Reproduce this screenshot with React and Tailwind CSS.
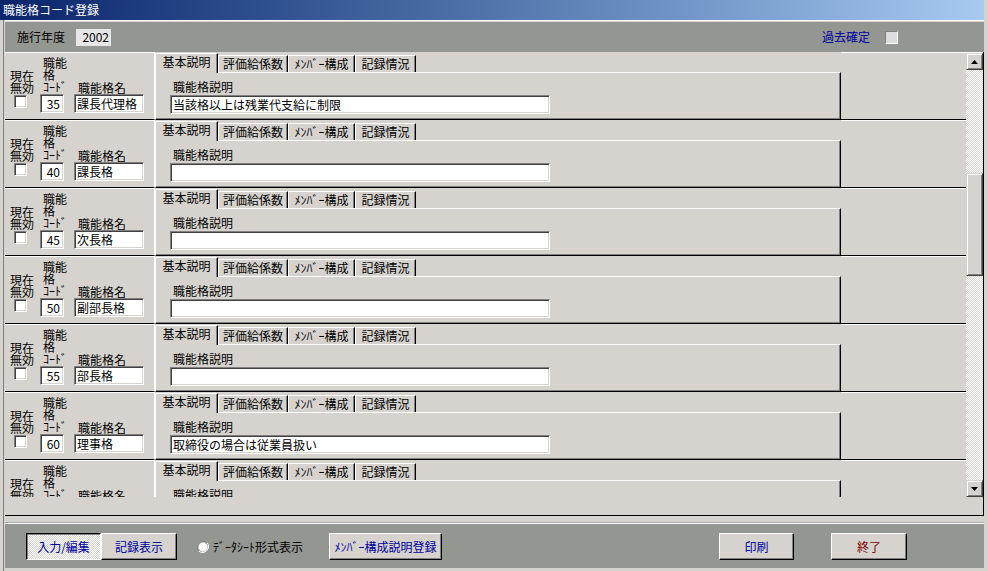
import React from "react";

const rows = [
  { code: "35", name: "課長代理格", desc: "当該格以上は残業代支給に制限" },
  { code: "40", name: "課長格", desc: "" },
  { code: "45", name: "次長格", desc: "" },
  { code: "50", name: "副部長格", desc: "" },
  { code: "55", name: "部長格", desc: "" },
  { code: "60", name: "理事格", desc: "取締役の場合は従業員扱い" },
  { code: "", name: "", desc: "" },
];

const sunken =
  "bg-white border border-t-[#808080] border-l-[#808080] border-b-white border-r-white shadow-[inset_1px_1px_0_#404040,inset_-1px_-1px_0_#d6d3ce]";
const raised =
  "bg-[#d6d3ce] border border-t-white border-l-white border-b-black border-r-black shadow-[inset_-1px_-1px_0_#808080]";

function Row({ code, name, desc }) {
  return (
    <div className="flex h-[68px] shrink-0">
      {/* left fields */}
      <div className="w-[150px] shrink-0 border-t border-t-white border-r border-r-white border-b border-b-black flex pl-[5px] pt-[4px]">
        <div className="w-[30px] shrink-0 flex flex-col">
          <div className="h-[13px]" />
          <div className="h-[12px] leading-[12px] whitespace-nowrap">現在</div>
          <div className="h-[12px] leading-[12px] whitespace-nowrap">無効</div>
          <div className={`mt-[1px] ml-[4px] w-[13px] h-[13px] ${sunken}`} />
        </div>
        <div className="w-[25px] shrink-0 flex flex-col">
          <div className="h-[12px] leading-[12px] pl-[3px] whitespace-nowrap">職能</div>
          <div className="h-[12px] leading-[12px] pl-[3px] whitespace-nowrap">格</div>
          <div className="h-[12px] leading-[12px] pl-[3px] whitespace-nowrap">ｺｰﾄﾞ</div>
          <div
            className={`mt-[1px] w-[24px] h-[19px] ${sunken} flex items-center justify-end pr-[3px] leading-[12px]`}
          >
            {code}
          </div>
        </div>
        <div className="ml-[9px] w-[70px] shrink-0 flex flex-col">
          <div className="h-[25px]" />
          <div className="h-[12px] leading-[12px] pl-[4px] whitespace-nowrap">職能格名</div>
          <div
            className={`w-[70px] h-[19px] ${sunken} flex items-center pl-[2px] leading-[12px] whitespace-nowrap overflow-hidden`}
          >
            {name}
          </div>
        </div>
      </div>

      {/* tab control */}
      <div className="w-[686px] shrink-0 flex flex-col">
        <div className="h-[20px] flex items-end shrink-0">
          <div className="relative z-10 -mb-px w-[63px] h-[20px] bg-[#d6d3ce] border-l border-t border-white border-r border-r-black shadow-[inset_-1px_0_0_#808080] rounded-tl-[2px] flex justify-center pt-[2px] leading-[12px] whitespace-nowrap">
            基本説明
          </div>
          <div className="w-[70px] h-[17px] bg-[#d6d3ce] border-l border-t border-white border-r border-r-black shadow-[inset_-1px_0_0_#808080] flex justify-center pt-[2px] leading-[12px] whitespace-nowrap">
            評価給係数
          </div>
          <div className="w-[67px] h-[17px] bg-[#d6d3ce] border-l border-t border-white border-r border-r-black shadow-[inset_-1px_0_0_#808080] flex justify-center pt-[2px] leading-[12px] whitespace-nowrap">
            ﾒﾝﾊﾞｰ構成
          </div>
          <div className="w-[61px] h-[17px] bg-[#d6d3ce] border-l border-t border-white border-r border-r-black shadow-[inset_-1px_0_0_#808080] flex justify-center pt-[2px] leading-[12px] whitespace-nowrap">
            記録情況
          </div>
        </div>
        <div className="flex-1 border-t border-l border-white border-r border-r-black border-b border-b-black shadow-[inset_-1px_-1px_0_#808080] flex flex-col">
          <div className="mt-[8px] pl-[17px] h-[12px] leading-[12px] whitespace-nowrap">職能格説明</div>
          <div
            className={`mt-[2px] ml-[14px] w-[380px] h-[19px] ${sunken} flex items-center pl-[2px] leading-[12px] whitespace-nowrap`}
          >
            {desc}
          </div>
        </div>
      </div>

      {/* filler */}
      <div className="flex-1 border-t border-t-white border-b border-b-black" />
    </div>
  );
}

function ScrollBtn({ up }) {
  return (
    <div className="h-[17px] w-[17px] shrink-0 bg-[#d6d3ce] border border-t-[#d6d3ce] border-l-[#d6d3ce] border-b-[#404040] border-r-[#404040] shadow-[inset_1px_1px_0_#ffffff,inset_-1px_-1px_0_#808080] flex items-center justify-center">
      <svg width="7" height="4" viewBox="0 0 7 4">
        {up ? (
          <polygon points="3.5,0 7,4 0,4" fill="#000" />
        ) : (
          <polygon points="0,0 7,0 3.5,4" fill="#000" />
        )}
      </svg>
    </div>
  );
}

export default function App() {
  return (
    <div className="w-[988px] h-[571px] bg-[#d6d3ce] overflow-hidden text-[12px] leading-[12px] text-black font-['Noto_Sans_CJK_JP','Noto_Sans',sans-serif] flex flex-col">
      {/* title bar */}
      <div className="h-[20px] shrink-0 mr-[4px] bg-linear-to-r from-[#0a246a] to-[#a6caf0] text-white flex items-center pl-[3px] text-[12px]">
        職能格コード登録
      </div>

      <div className="flex-1 ml-[3px] mr-[4px] border-l border-l-[#808080] pl-[1px] flex flex-col">
        <div className="h-[2px] shrink-0 border-t border-white" />

        {/* header band */}
        <div className="h-[30px] shrink-0 bg-[#949692] flex items-center pl-[12px] pr-[86px]">
          <span>施行年度</span>
          <div className="ml-[11px] w-[35px] h-[17px] bg-[#e6e6e6] flex items-center justify-end pr-[2px]">
            2002
          </div>
          <div className="flex-1" />
          <span className="text-[#0000a0]">過去確定</span>
          <div className="ml-[15px] w-[13px] h-[13px] bg-[#dcdcdc] border border-t-[#808080] border-l-[#808080] border-b-white border-r-white" />
        </div>

        {/* list */}
        <div className="shrink-0 flex flex-col border-r border-b border-black">
          <div className="flex h-[445px]">
            <div className="w-[961px] h-[445px] overflow-hidden flex flex-col">
              {rows.map((r, i) => (
                <Row key={i} {...r} />
              ))}
            </div>
            <div className="w-[17px] h-[445px] flex flex-col border-t border-white bg-[repeating-conic-gradient(#ffffff_0%_25%,#d6d3ce_0%_50%)] bg-[length:2px_2px]">
              <ScrollBtn up />
              <div className="h-[103px] shrink-0" />
              <div className="h-[103px] shrink-0 bg-[#d6d3ce] border border-t-[#d6d3ce] border-l-[#d6d3ce] border-b-[#404040] border-r-[#404040] shadow-[inset_1px_1px_0_#ffffff,inset_-1px_-1px_0_#808080]" />
              <div className="flex-1" />
              <ScrollBtn />
            </div>
          </div>
          <div className="h-[18px]" />
        </div>

        <div className="h-[7px] shrink-0 border-b border-b-[#a8a8a8]" />

        {/* footer */}
        <div className="h-[45px] shrink-0 bg-[#949692] border-t border-white flex items-start pt-[9px] pl-[21px]">
          <div className="w-[75px] h-[27px] border border-t-black border-l-black border-b-white border-r-white shadow-[inset_1px_1px_0_#808080] bg-[repeating-conic-gradient(#ffffff_0%_25%,#d6d3ce_0%_50%)] bg-[length:2px_2px] flex items-center justify-center text-[#0000a0] whitespace-nowrap">
            入力/編集
          </div>
          <div className={`w-[76px] h-[27px] ${raised} flex items-center justify-center text-[#0000a0] whitespace-nowrap`}>
            記録表示
          </div>
          <div className="ml-[20px] w-[110px] h-[27px] flex items-center">
            <svg width="12" height="12" viewBox="0 0 12 12">
              <path d="M10.2 1.8 A6 6 0 0 0 1.8 10.2" fill="none" stroke="#808080" strokeWidth="1" />
              <path d="M1.8 10.2 A6 6 0 0 0 10.2 1.8" fill="none" stroke="#ffffff" strokeWidth="1" />
              <circle cx="6" cy="6" r="4.5" fill="#ffffff" stroke="#d6d3ce" strokeWidth="0.8" />
            </svg>
            <span className="ml-[4px] whitespace-nowrap">ﾃﾞｰﾀｼｰﾄ形式表示</span>
          </div>
          <div className={`ml-[22px] w-[113px] h-[27px] ${raised} flex items-center justify-center text-[#0000a0] whitespace-nowrap`}>
            ﾒﾝﾊﾞｰ構成説明登録
          </div>
          <div className={`ml-[277px] w-[75px] h-[27px] ${raised} flex items-center justify-center text-[#0000a0] whitespace-nowrap`}>
            印刷
          </div>
          <div className={`ml-[37px] w-[76px] h-[27px] ${raised} flex items-center justify-center text-[#800000] whitespace-nowrap`}>
            終了
          </div>
        </div>
      </div>
    </div>
  );
}
